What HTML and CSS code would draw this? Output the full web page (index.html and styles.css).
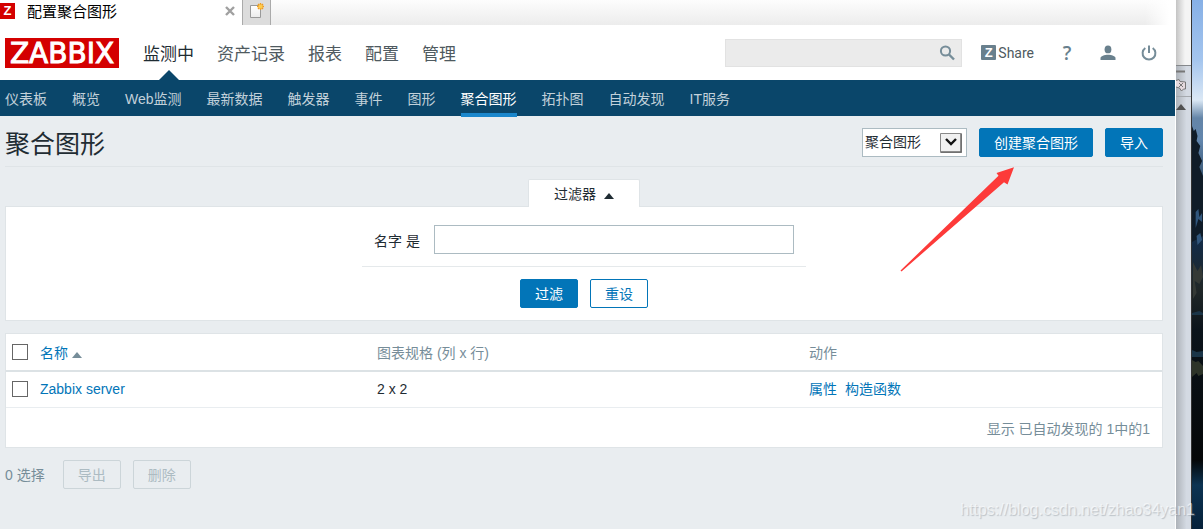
FILE: index.html
```html
<!DOCTYPE html>
<html lang="zh-CN">
<head>
<meta charset="utf-8">
<title>配置聚合图形</title>
<link rel="stylesheet" href="styles.css">
</head>
<body>
<div class="window">
  <div class="tabs">
    <div class="tab">
      <span class="favicon">Z</span>
      <span class="tab-title">配置聚合图形</span>
      <button class="tab-close" aria-label="关闭"><svg width="12" height="12" viewBox="0 0 12 12"><path d="M2 2l8 8M10 2l-8 8" stroke="#a0a0a0" stroke-width="2.4"/></svg></button>
    </div>
    <button class="tab-new" aria-label="新建">
      <svg width="28" height="25" viewBox="0 0 28 25"><defs><linearGradient id="sheet" x1="0" y1="0" x2="0" y2="1"><stop offset="0" stop-color="#fff"/><stop offset="1" stop-color="#ebebeb"/></linearGradient></defs><path d="M7.500 5.500h10v12h-10z" fill="url(#sheet)" stroke="#999"/><path d="M17.500 3v7M14 6.500h7M15 4l5 5M20 4l-5 5" stroke="#f09c1c" stroke-width="1.400"/><circle cx="17.500" cy="6.500" r="2" fill="#ffcc4a"/></svg>
    </button>
  </div>
  <header class="header">
    <a class="logo" href="#">ZABBIX</a>
    <nav class="menu">
      <a class="active" href="#">监测中</a><a href="#">资产记录</a><a href="#">报表</a><a href="#">配置</a><a href="#">管理</a>
    </nav>
    <div class="search">
      <input type="text" aria-label="搜索">
      <button aria-label="搜索"><svg width="16" height="16" viewBox="0 0 16 16"><circle cx="6.500" cy="6" r="4.600" fill="none" stroke="#768d99" stroke-width="2"/><path d="M10 9.500l5 5" stroke="#768d99" stroke-width="2.400"/></svg></button>
    </div>
    <div class="user">
      <a class="share" href="#"><span class="share-mark">Z</span>Share</a>
      <a class="help" href="#">?</a>
      <a href="#" aria-label="用户"><svg width="16" height="16" viewBox="0 0 16 16"><ellipse cx="8" cy="4.400" rx="3.400" ry="3.900" fill="#69808d"/><path d="M.5 15v-2c0-2 4-3.300 7.500-3.300s7.500 1.300 7.500 3.300v2z" fill="#69808d"/></svg></a>
      <a href="#" aria-label="退出"><svg width="16" height="16" viewBox="0 0 16 16"><path d="M4.300 3a6.400 6.400 0 1 0 7.400 0M8 .5v7.500" fill="none" stroke="#768d99" stroke-width="2"/></svg></a>
    </div>
  </header>
  <nav class="submenu">
    <a href="#">仪表板</a><a href="#">概览</a><a href="#">Web监测</a><a href="#">最新数据</a><a href="#">触发器</a><a href="#">事件</a><a href="#">图形</a><a class="active" href="#">聚合图形</a><a href="#">拓扑图</a><a href="#">自动发现</a><a href="#">IT服务</a>
  </nav>
  <main class="page">
    <div class="title-row">
      <h1>聚合图形</h1>
      <div class="select">
        <select aria-label="类型"><option>聚合图形</option></select>
        <svg width="22" height="20" viewBox="0 0 22 20"><path d="M.5.5h21v19H.5z" fill="#f0f0f0" stroke="#888"/><path d="M1 19h20V1" fill="none" stroke="#696969" stroke-width="1.500"/><path d="M6 6l5 5 5-5" fill="none" stroke="#111" stroke-width="2.400"/></svg>
      </div>
      <button class="btn">创建聚合图形</button>
      <button class="btn">导入</button>
    </div>
    <button class="filter-tab">过滤器 <span class="up"></span></button>
    <form class="filter">
      <div class="field"><label for="name">名字 是</label><input id="name" type="text"></div>
      <div class="actions"><button type="button" class="btn">过滤</button><button type="button" class="btn outline">重设</button></div>
    </form>
    <table class="list">
      <colgroup><col class="c-check"><col class="c-name"><col class="c-size"><col></colgroup>
      <thead><tr><th><input type="checkbox" aria-label="全选"></th><th><a href="#">名称 <span class="up sort"></span></a></th><th>图表规格 (列 x 行)</th><th>动作</th></tr></thead>
      <tbody><tr><td><input type="checkbox" aria-label="Zabbix server"></td><td><a href="#">Zabbix server</a></td><td>2 x 2</td><td><span class="links"><a href="#">属性</a><a href="#">构造函数</a></span></td></tr></tbody>
      <tfoot><tr><td colspan="4">显示 已自动发现的 1中的1</td></tr></tfoot>
    </table>
    <div class="bulk"><span>0 选择</span><button class="btn disabled" disabled>导出</button><button class="btn disabled" disabled>删除</button></div>
  </main>
  <svg class="pointer" width="116" height="106" viewBox="0 0 116 106"><path d="M.5 103.500L98.500 8.800l-2-2.800L114 .3l-6.500 17.200-3.500-2.300L1.500 104.500z" fill="#fd3a39"/></svg>
</div>
<aside class="side">
  <div class="side-top"></div>
  <div class="side-tool"><svg width="15" height="30" viewBox="0 0 15 30"><path d="M0 5.500h9" stroke="#777" stroke-width="2"/><path d="M0 14.500l3-1 1 2 5.500.5v7H7.500l-2 2-2-3-3.500-1" fill="#e5dade" stroke="#777"/><path d="M3 17l4 4M7 17l-4 4" stroke="#777"/></svg></div>
  <div class="side-scroll"><svg width="15" height="6" viewBox="0 0 15 6"><path d="M0 6L5 0l5 6z" fill="#505050"/></svg></div>
</aside>
<div class="desktop">
  <svg width="100%" height="100%" viewBox="0 0 12 529" preserveAspectRatio="none">
    <path d="M0 126l2 5 2-2 2 7-1 5 4 5-2 7 4 8-3 6 4 9v60l-12 6z" fill="#101c28"/>
    <path d="M4 212l3-3 1 8 3-4v9l-4-3-3 9zM5 236l4-3 2 7-5 5z" fill="#31567c"/>
    <path d="M1 262l5 9 4-6 2 12-4 7-5-3 2 12-4 6z" fill="#343936"/>
    <path d="M0 313l8-2 4 2v2H0zM0 350l5 2 7-1v6H0z" fill="#1a3548"/>
    <path d="M0 360l4 2 3-1 5 5v8l-5 2-2-3-5 4z" fill="#2d3429"/>
  </svg>
</div>
<div class="watermark">https://blog.csdn.net/zhao34yan1</div>
</body>
</html>
```
FILE: styles.css
```css
* { box-sizing: border-box; }
body {
  position: relative;
  display: flex;
  min-height: 100vh;
  margin: 0;
  overflow: hidden;
  background: #e9edf0;
  color: #1f2c33;
  font: 14px/20px "Liberation Sans", "Noto Sans CJK SC", sans-serif;
}
a { color: #0275b8; text-decoration: none; }
button, input, select { font: inherit; color: inherit; margin: 0; }
button { cursor: pointer; }
svg { display: block; }

.window { position: relative; flex: 1; min-width: 0; }
.tabs {
  display: flex;
  height: 25px;
  background: linear-gradient(90deg, transparent calc(100% - 30px), #fff calc(100% - 6px)), linear-gradient(#fdfdfd, #ececec);
}
.tab { display: flex; width: 242px; background: #fff; color: #000; font-size: 15px; line-height: 24px; }
.favicon { width: 15px; height: 16px; margin-top: 3px; background: #d40000; color: #fff; font-size: 13px; font-weight: bold; line-height: 16px; text-align: center; }
.tab-title { flex: 1; padding-left: 12px; }
.tab-close { align-self: flex-start; margin: 5px 6px 0 0; padding: 0; border: 0; background: none; }
.tab-new { width: 29px; padding: 0; border: solid #aaa; border-width: 0 1px; background: #dcdcdc; }

.header { display: flex; align-items: center; height: 55px; padding: 0 18px 0 5px; background: #fff; }
.logo { width: 114px; height: 30px; background: #d40000; color: #fff; font: 28px/31px "DejaVu Sans", sans-serif; text-align: center; -webkit-text-stroke: 1px #fff; }
.menu { display: flex; align-self: stretch; flex: 1; gap: 23px; padding-left: 24px; font-size: 17px; line-height: 60px; }
.menu a { color: #4f5a60; }
.menu .active { position: relative; color: #1f2c33; }
.menu .active::after {
  content: "";
  position: absolute;
  bottom: 0;
  left: 50%;
  border: solid transparent;
  border-width: 0 10px 10px;
  border-bottom-color: #0a466a;
  transform: translateX(-50%);
}
.search { display: flex; align-items: center; width: 237px; height: 28px; padding-right: 6px; border: 1px solid #e2e2e2; background: #ebebeb; }
.search input { flex: 1; min-width: 0; border: 0; background: none; }
.search button { padding: 0; border: 0; background: none; }
.user { display: flex; align-items: center; gap: 25px; margin-left: 19px; }
.user a { color: #4f5a60; }
.share { display: flex; align-items: center; gap: 2px; font-family: Roboto, sans-serif; }
.share-mark { width: 15px; height: 15px; border-radius: 1px; background: #69808d; color: #fff; font: bold 13px/15px "Liberation Sans", sans-serif; text-align: center; }
.user .help { width: 16px; color: #69808d; font: 600 19px/20px "Open Sans", sans-serif; text-align: center; }

.submenu { display: flex; gap: 25px; height: 36px; padding-left: 5px; background: #0a466a; line-height: 38px; }
.submenu a { color: #c2d1da; white-space: nowrap; }
.submenu .active { height: 37px; border-bottom: 4px solid #1b87cc; color: #fff; }

.page { padding: 0 12px 0 5px; }
.title-row { display: flex; align-items: center; gap: 12px; height: 51px; padding-top: 2px; border-bottom: 1px solid #dfe4e7; }
h1 { flex: 1; margin: 0; padding-top: 4px; font-size: 25px; font-weight: normal; line-height: 36px; }
.select { position: relative; }
.select select { display: block; width: 105px; height: 29px; padding: 0 2px; border: 1px solid #acbbc2; border-radius: 0; background: #fff; appearance: none; }
.select svg { position: absolute; top: 5px; right: 5px; pointer-events: none; }
.btn { height: 29px; padding: 1px 14px 0; border: 1px solid #0275b8; border-radius: 2px; background: #0275b8; color: #fff; line-height: 26px; }
.btn.outline { background: #fff; color: #0275b8; }
.btn.disabled { border-color: #ccd5d9; background: transparent; color: #acbbc2; }
.up { display: inline-block; margin-left: 4px; border: solid transparent; border-width: 0 5px 6px; border-bottom-color: #1f2c33; }
.up.sort { margin-left: 0; border-bottom-color: #768d99; }

.filter-tab { position: relative; display: block; width: 112px; height: 28px; margin: 12px auto 0; padding: 0; border: 1px solid #dfe4e7; border-bottom: 0; border-radius: 2px 2px 0 0; background: #fff; }
.filter { display: flex; flex-direction: column; align-items: center; margin-top: -1px; padding: 18px 0 12px; border: 1px solid #dfe4e7; background: #fff; }
.field { display: flex; align-items: center; gap: 12px; padding: 0 12px 12px; border-bottom: 1px solid #e5e9eb; }
.field label { width: 48px; padding-top: 2px; white-space: nowrap; }
.field input { width: 360px; height: 29px; border: 1px solid #acbbc2; }
.actions { display: flex; gap: 12px; padding-top: 12px; }

.list { width: 100%; margin-top: 12px; border: 1px solid #dfe4e7; border-collapse: separate; border-spacing: 0; table-layout: fixed; background: #fff; }
.list th, .list td { height: 36px; padding: 0; text-align: left; font-weight: normal; }
.list th { height: 38px; padding-top: 1px; border-bottom: 2px solid #dce2e5; color: #768d99; }
.list tbody td { padding-bottom: 2px; border-bottom: 1px solid #e9edf0; }
.list tfoot td { height: 39px; padding: 2px 12px 0 0; color: #768d99; text-align: right; }
.list th:first-child { padding: 0 0 0 6px; }
.list tbody td:first-child { padding-left: 6px; }
.list input { display: block; width: 16px; height: 16px; border: 1px solid #666; background: #fff; appearance: none; }
.c-check { width: 34px; }
.c-name { width: 337px; }
.c-size { width: 432px; }
.links { display: flex; gap: 8px; }
.bulk { display: flex; align-items: center; gap: 12px; margin-top: 12px; color: #768d99; }
.bulk span { margin-right: 6px; }

.pointer { position: absolute; top: 167px; right: 159px; pointer-events: none; }

.side { display: flex; flex-direction: column; width: 16px; border-left: 1px solid #fff; background: linear-gradient(90deg, #aeb3b9, #d4dae3 70%); }
.side-top { height: 66px; border-bottom: 1px solid #85888b; background: linear-gradient(90deg, #c4c4c4, #f4f4f4 60%); }
.side-tool { height: 31px; border-bottom: 1px solid #a5a9ae; }
.side-scroll { padding-top: 7px; }
.desktop { width: 12px; border-left: 1px solid #333; background: linear-gradient(#86b0e6, #a4c5ee 60px, #dbe8f5 100px, #6485a8 118px, #6286ad 140px, #29455f 190px, #142b45 245px, #202728 290px, #0b141b 330px, #050708 460px, #0c3352 485px, #06213a 529px); }
.watermark { position: absolute; right: 8px; bottom: 9px; color: rgba(255, 255, 255, .6); font-size: 16px; text-shadow: 1px 1px 1px rgba(120, 130, 140, .4); }
```
